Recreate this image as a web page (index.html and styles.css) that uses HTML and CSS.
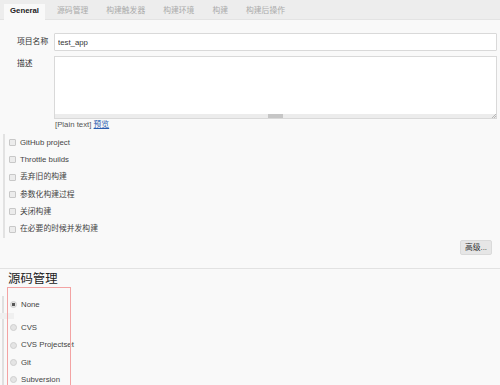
FILE: index.html
```html
<!DOCTYPE html>
<html>
	<head>
		<meta charset="UTF-8">
		<title>test_app Config</title>
		<link rel="stylesheet" href="styles.css">
	</head>
	<body>
		<div class="tabbar">
			<span class="tab active">General</span>
			<span class="tab">源码管理</span>
			<span class="tab">构建触发器</span>
			<span class="tab">构建环境</span>
			<span class="tab">构建</span>
			<span class="tab">构建后操作</span>
		</div>
		<div class="general">
			<div class="field">
				<label class="fl">项目名称</label>
				<input class="txt" type="text" value="test_app">
			</div>
			<div class="field desc">
				<label class="fl">描述</label>
				<div class="area-wrap">
					<textarea class="area"></textarea>
					<div class="hscroll">
						<span class="thumb"></span>
						<svg class="grip" width="5" height="4" viewBox="0 0 5 4"><path d="M1 4L5 0M3 4L5 2" stroke="#aaa" stroke-width="0.8"/></svg>
					</div>
				</div>
			</div>
			<div class="hint">[Plain text] <a href="#">预览</a></div>
			<ul class="opts">
				<li><input class="cb" type="checkbox">GitHub project</li>
				<li><input class="cb" type="checkbox">Throttle builds</li>
				<li><input class="cb" type="checkbox">丢弃旧的构建</li>
				<li><input class="cb" type="checkbox">参数化构建过程</li>
				<li><input class="cb" type="checkbox">关闭构建</li>
				<li><input class="cb" type="checkbox">在必要的时候并发构建</li>
			</ul>
			<div class="adv-row"><button class="adv">高级...</button></div>
		</div>
		<div class="scm">
			<h2>源码管理</h2>
			<div class="mark"></div>
			<ul class="radios">
				<li><input class="rd" type="radio" name="scm" checked>None</li>
				<li class="gap"></li>
				<li><input class="rd" type="radio" name="scm">CVS</li>
				<li><input class="rd" type="radio" name="scm">CVS Projectset</li>
				<li><input class="rd" type="radio" name="scm">Git</li>
				<li><input class="rd" type="radio" name="scm">Subversion</li>
			</ul>
		</div>
	</body>
</html>
```
FILE: styles.css
```css
*{box-sizing:border-box;}
html,body{overflow:hidden;}
body{margin:0;background:#f9f9f9;color:#333;font:7.8px/1 "Liberation Sans","Noto Sans CJK SC",sans-serif;}
ul{list-style:none;}

/* tabs */
.tabbar{height:20px;background:#ededed;border-bottom:1px solid #e3e3e3;display:flex;align-items:flex-end;gap:6px;padding-left:4px;}
.tab{height:15px;line-height:13px;padding:0 6px;color:#aaa;}
.tab.active{height:16px;margin-bottom:-1px;background:#f9f9f9;color:#222;font-weight:bold;}

/* general */
.general{padding:13px 3px 13px 0;border-bottom:1px solid #e2e2e2;}
.field{display:flex;margin-bottom:5px;}
.field.desc{margin-bottom:1px;}
.fl{flex:none;width:54px;padding-left:17px;line-height:18px;}
.desc .fl{line-height:16px;}
.txt{flex:1;height:18px;margin:0;padding:0 3px;border:1px solid #d9d9d9;border-radius:1px;background:#fff;color:#333;font:inherit;}
.area-wrap{flex:1;height:63px;display:flex;flex-direction:column;border:1px solid #d9d9d9;background:#fff;}
.area{flex:1;border:0;resize:none;background:transparent;outline:none;}
.hscroll{height:4px;display:flex;align-items:flex-end;background:#ececec;}
.hscroll .thumb{width:15px;height:4px;margin-left:213px;background:#c6c6c6;}
.hscroll .grip{margin-left:auto;}
.hint{padding-left:55px;line-height:10px;color:#555;}
.hint a{color:#2a5db0;}

.opts{margin:4px 0 0 3px;padding:0 0 0 4px;border-left:2px solid #e2e2e2;}
.opts li{height:17.33px;display:flex;align-items:center;color:#444;}
.cb{appearance:none;-webkit-appearance:none;flex:none;width:7px;height:7px;margin:0 4px 0 0;border:1px solid #c8c8c8;border-radius:1px;background:#ececec;}

.adv-row{display:flex;justify-content:flex-end;padding:2px 5px 0 0;}
.adv{height:15px;padding:0 4px;border:1px solid #dadada;border-radius:2px;background:#e6e6e6;color:#333;font:inherit;}

/* scm */
.scm{position:relative;height:116px;overflow:hidden;}
.scm h2{margin:0;padding:4px 0 0 8px;font-size:12.4px;line-height:13px;font-weight:normal;color:#222;}
.mark{position:absolute;left:7px;top:18px;width:64px;height:110px;border:1px solid #f3a3a3;}
.radios{margin:10px 0 0 2px;padding:0 0 0 6px;border-left:2px solid #e0e0e0;}
.radios li{height:17.33px;display:flex;align-items:center;color:#444;}
.radios li.gap{height:6px;width:14px;margin-left:-10px;background:#f0f0f0;}
.rd{appearance:none;-webkit-appearance:none;flex:none;width:7px;height:7px;margin:0 4px 0 0;border:1px solid #cfcfcf;border-radius:50%;background:#e4e4e4;}
.rd:checked{background:radial-gradient(circle,#555 0 1.4px,#e4e4e4 2px);}
```
